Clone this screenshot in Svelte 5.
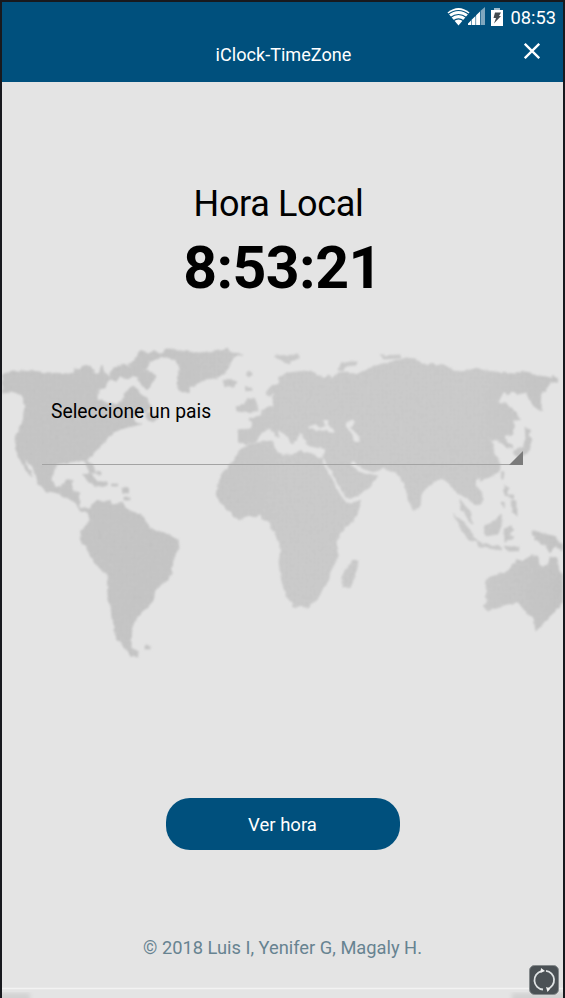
<script>
  const land = [
    // North and Central America
    '2,374 12,372 24,371 42,372 46,374 58,373 70,374 76,369 80,370 82,366 90,366 94,370 92,374 98,374 102,366 104,372 110,377 108,383 106,387 98,390 97,400 106,402 116,404 122,402 124,394 128,388 134,386 140,390 142,396 146,399 152,408 142,412 132,417 136,422 142,424 128,427 116,431 108,437 102,446 92,455 87,461 92,465 96,473 90,473 86,463 80,461 70,462 58,464 54,470 52,480 55,486 62,487 66,480 73,479 72,490 79,493 79,507 90,509 90,513 80,511 76,503 66,497 58,493 46,491 38,484 36,475 28,461 25,459 28,468 33,477 27,472 18,456 15,438 22,424 25,405 22,396 16,392 2,393',
    // Canadian islands
    '110,374 114,367 124,364 132,367 136,362 144,369 140,378 134,376 128,379 120,377 116,381 110,380',
    '136,356 140,351 148,354 152,350 160,353 166,349 174,349 180,353 177,360 166,357 156,359 150,362 146,370 136,369 128,364 134,362',
    '140,373 148,370 156,376 152,384 148,389 142,386 134,384 128,382 138,380',
    '146,411 152,414 159,418 154,422 147,420',
    // Greenland, Svalbard, Iceland
    '168,350 180,351 200,353 220,350 226,349 232,353 244,354 234,357 230,364 224,374 216,378 206,379 196,384 190,388 188,392 182,393 177,388 177,380 180,370 177,360 168,357',
    '275,356 298,355 298,359 290,361 290,364 284,362', '223,381 230,379 236,382 234,387 225,387',
    '247,372 251,371 251,375 248,376', '246,387 251,387 251,391 247,391',
    '339,370 341,364 350,362 357,362 356,365 346,366 342,371', '380,356 400,355 401,358 383,359',
    // British Isles
    '236,407 244,405 248,398 254,398 257,405 258,410 250,413 237,411',
    // Europe and Asia
    '237,430 250,429 254,422 249,420 250,418 260,416 262,411 271,406 274,398 266,393 270,387 278,384 279,377 288,373 305,371 316,373 322,378 329,375 330,379 338,373 347,372 354,374 362,373 368,369 382,364 400,360 406,358 416,359 422,364 444,365 454,371 464,372 476,368 486,371 504,373 515,374 522,371 534,375 552,378 553,376 558,380 557,383 552,381 545,391 542,391 541,411 535,408 528,397 528,392 518,394 514,391 508,395 504,391 498,402 506,404 515,412 521,420 514,419 514,424 512,434 504,437 507,441 514,448 507,448 499,440 488,439 493,443 494,454 500,462 500,470 490,477 480,480 476,485 482,494 482,503 476,506 470,500 462,496 456,492 450,484 442,478 436,481 425,489 421,496 420,508 413,510 408,497 405,484 396,472 384,468 374,472 360,468 350,462 356,469 363,473 378,476 370,486 358,495 347,500 342,495 334,482 324,466 323,459 326,449 310,446 304,442 300,435 296,438 293,444 284,433 278,429 278,438 270,428 262,432 256,441 246,444 238,441',
    // Africa
    '250,444 272,441 276,450 282,455 290,455 300,451 312,454 322,459 328,472 338,490 344,500 350,503 361,501 358,511 352,522 340,533 336,541 338,558 330,572 328,583 322,590 318,598 308,607 293,606 286,594 282,582 280,570 279,562 281,548 278,538 272,529 270,521 264,520 260,514 256,517 250,516 237,520 226,509 217,497 218,489 220,478 228,466 234,461 240,450',
    '354,560 358,562 356,572 351,586 343,588 343,572',
    // South America
    '80,510 90,510 92,504 98,501 110,501 112,505 122,503 130,511 142,515 148,524 150,529 168,534 178,539 179,548 174,558 171,573 168,580 156,588 152,602 140,615 132,626 131,648 139,652 137,656 130,655 120,643 115,634 112,610 108,598 107,574 94,563 86,547 80,540 82,530 90,521 88,512',
    '144,646 151,646 151,649 144,649',
    // Caribbean
    '82,475 90,473 97,481 108,483 106,487 93,485', '112,484 118,484 117,487 112,487', '122,488 129,489 128,493 123,493', '124,497 130,497 130,500 124,500', '96,471 101,472 101,475 97,474',
    // Australia and New Guinea
    '486,579 497,575 508,571 518,559 521,562 531,556 538,556 539,565 543,567 549,563 550,556 557,558 559,571 563,576 563,602 553,613 543,623 536,632 534,619 526,612 518,602 500,606 487,611 483,606 487,603',
    '531,531 536,531 543,534 554,536 563,546 563,551 555,546 550,553 545,545 535,540',
    // Indonesia and Philippines
    '460,499 464,505 470,511 473,524 468,522 467,515 461,510', '453,513 462,521 470,530 477,542 469,540 461,528', '476,541 493,546 502,547 501,550 487,548 477,545', '484,526 492,523 501,514 503,521 498,534 486,536', '504,529 512,526 514,530 508,533 514,538 505,542', '504,546 511,547 520,546 518,551 508,551', '504,485 508,488 508,495 514,495 513,498 505,496', '511,500 517,501 517,516 512,511', '501,502 505,502 503,508', '501,472 504,473 503,479',
    // Japan
    '525,427 530,429 528,436 532,440 530,449 524,455 516,457 513,452 523,447 526,438'
  ];
  const seas = [
    '308,427 316,424 320,428 325,426 323,420 328,420 328,426 334,430 333,433 326,431 310,429',
    '346,424 352,419 355,422 350,428 357,433 360,441 354,442 352,433 346,428',
    '270,397 274,393 272,405 266,408',
    '296,437 301,434 306,441 303,444',
    '475,480 480,478 479,488 475,485',
    '125,381 136,379 142,386 146,397 142,395 138,388 132,385 125,386'
  ];
</script>

<main class="screen">
  <svg class="map" viewBox="2 2 561 996" aria-hidden="true">
    <defs>
      <pattern id="mesh" width="4" height="4" patternUnits="userSpaceOnUse">
        <rect width="4" height="4" fill="#c4c4c4" />
        <path d="M0 .5H4M.5 0V4" stroke="#cbcbcb" />
      </pattern>
      <linearGradient id="shade" x1="0" x2="1">
        <stop offset="0" stop-color="#bbb" stop-opacity=".25" />
        <stop offset=".3" stop-color="#bbb" stop-opacity=".25" />
        <stop offset=".5" stop-color="#d0d0d0" stop-opacity=".25" />
        <stop offset=".85" stop-color="#d0d0d0" stop-opacity=".25" />
        <stop offset="1" stop-color="#b8b8b8" stop-opacity=".3" />
      </linearGradient>
      <clipPath id="coast">
        {#each land as points}<polygon {points} />{/each}
      </clipPath>
      <filter id="soft" x="0" y="0" width="1" height="1">
        <feTurbulence type="fractalNoise" baseFrequency=".2" numOctaves="1" seed="4" result="noise" />
        <feDisplacementMap in="SourceGraphic" in2="noise" scale="4.5" xChannelSelector="R" yChannelSelector="G" />
        <feGaussianBlur stdDeviation=".9" />
      </filter>
      <filter id="haze"><feGaussianBlur stdDeviation="2" /></filter>
    </defs>
    <g filter="url(#soft)">
      {#each land as points}<polygon {points} fill="url(#mesh)" stroke="#c8c8c8" stroke-width=".8" />{/each}
      <rect x="2" y="340" width="561" height="320" fill="url(#shade)" clip-path="url(#coast)" />
      {#each seas as points}<polygon {points} fill="#e4e4e4" />{/each}
      <path d="M323 460L331 474L341 493L347 501L358 499M352 463L360 470L368 473" fill="none" stroke="#e4e4e4" stroke-width="3" />
    </g>
    <g fill="#d2d2d2" filter="url(#haze)">
      <rect x="-4" y="993" width="34" height="10" />
      <rect x="512" y="993" width="56" height="10" />
    </g>
    <path d="M2 988.5H563" stroke="#f3f3f3" stroke-width="1.5" />
  </svg>

  <header>
    <div class="status">
      <svg width="38" height="20" viewBox="447 7 38 20">
        <path d="M447.5 12.5Q458.5 3.500 469.500 12.500L458.500 25.500Z" fill="#fff" />
        <path d="M448 14.500Q458.500 6.500 469 14.500M450.500 17.500Q458.500 11.500 466.500 17.500M453.500 20.800Q458.500 17 463.500 20.800" fill="none" stroke="#00507d" stroke-width="1.100" />
        <path d="M468 25V23.500L471 20.500V25ZM471.600 25V19.700L475.500 16V25ZM476.100 25V15.300L480 11.500V25Z" fill="#fff" />
        <path d="M480.600 25V10.800L485 7V25Z" fill="#7fa7be" />
      </svg>
      <svg class="battery" width="12" height="18" viewBox="0 0 12 18">
        <path d="M3 0H9V2H3Z" fill="#9fbccd" />
        <path d="M0 2H12V18H0Z" fill="#fff" />
        <path d="M4 4.500H10L8 8H10L3 15.500L5 10H2.500Z" fill="#444b50" />
      </svg>
      <span>08:53</span>
    </div>
    <div class="bar">
      <h1>iClock-TimeZone</h1>
      <button class="close" aria-label="Cerrar">
        <svg width="16" height="16" viewBox="0 0 16 16"><path d="M.8 .8L15.200 15.200M15.200 .8L.8 15.200" stroke="#fff" stroke-width="2.300" /></svg>
      </button>
    </div>
  </header>

  <section class="clock">
    <h2>Hora Local</h2>
    <strong>8:53:21</strong>
  </section>

  <div class="spinner">
    <span>Seleccione un pais</span>
    <svg width="14" height="14" viewBox="0 0 14 14"><path d="M14 0V14H0Z" fill="#7b7b7b" /></svg>
  </div>

  <button class="action">Ver hora</button>
  <footer>© 2018 Luis I, Yenifer G, Magaly H.</footer>

  <div class="rotate">
    <svg width="30" height="30" viewBox="0 0 30 30">
      <rect x=".5" y=".5" width="29" height="29" rx="5" fill="#4b5155" stroke="#858a8c" />
      <path d="M12.500 6.200A9.300 9.300 0 0 0 14 24.500M17 5.900A9.300 9.300 0 0 1 18.500 24" fill="none" stroke="#dfe3e4" stroke-width="1.800" />
      <path d="M12 3L16 6L11.500 8ZM18.500 27L17 22L21.500 23.500Z" fill="#f2f2f2" />
    </svg>
  </div>
</main>

<style>
  :global(body) { margin: 0; background: #e4e4e4; }
  .screen {
    position: relative;
    box-sizing: border-box;
    height: 998px;
    border: 2px solid #18191e;
    border-bottom: 0;
    background: #e4e4e4;
    color: #000;
    font-family: Roboto, sans-serif;
    display: flex;
    flex-direction: column;
    align-items: center;
    overflow: hidden;
  }
  .map { position: absolute; inset: 0; width: 561px; height: 996px; z-index: 0; }
  header, section, .spinner, .action, footer { z-index: 1; }
  header { align-self: stretch; height: 80px; background: #00507d; color: #fff; }
  .status { display: flex; justify-content: flex-end; align-items: center; height: 30px; padding-right: 7px; font-size: 18.3px; }
  .battery { margin: 0 7px 0 6px; }
  .bar { display: grid; grid-template-columns: 48px 1fr 48px; align-items: center; height: 44px; }
  h1 { grid-column: 2; margin: 0 0 0 2px; text-align: center; font-size: 18.1px; font-weight: 400; }
  .close { display: flex; padding: 0; margin: -6px 0 0 9px; border: 0; background: none; width: 16px; }
  .clock { display: flex; flex-direction: column; align-items: center; margin-top: 98px; }
  h2 { margin: 0 8px 0 0; font-size: 36px; line-height: 48px; font-weight: 400; letter-spacing: -.35px; }
  strong { font-size: 59px; line-height: 80px; font-weight: 700; letter-spacing: -.6px; }
  .spinner {
    display: flex;
    justify-content: space-between;
    align-items: flex-end;
    box-sizing: border-box;
    width: 481px;
    height: 108px;
    margin-top: 49px;
    border-bottom: 1px solid #a3a3a3;
    font-size: 19.3px;
  }
  .spinner span { padding: 0 0 40px 9px; line-height: 24px; }
  .spinner svg { margin-bottom: -1px; }
  .action {
    width: 234px;
    height: 52px;
    margin-top: 333px;
    padding: 2px 0 0;
    border: 0;
    border-radius: 24px;
    background: #00507d;
    color: #fff;
    font: 18.5px Roboto, sans-serif;
    flex: none;
  }
  footer { margin-top: 86px; color: #678391; font-size: 18.3px; line-height: 24px; }
  .rotate { position: absolute; right: 4px; bottom: 3px; width: 30px; height: 30px; z-index: 2; }
</style>
